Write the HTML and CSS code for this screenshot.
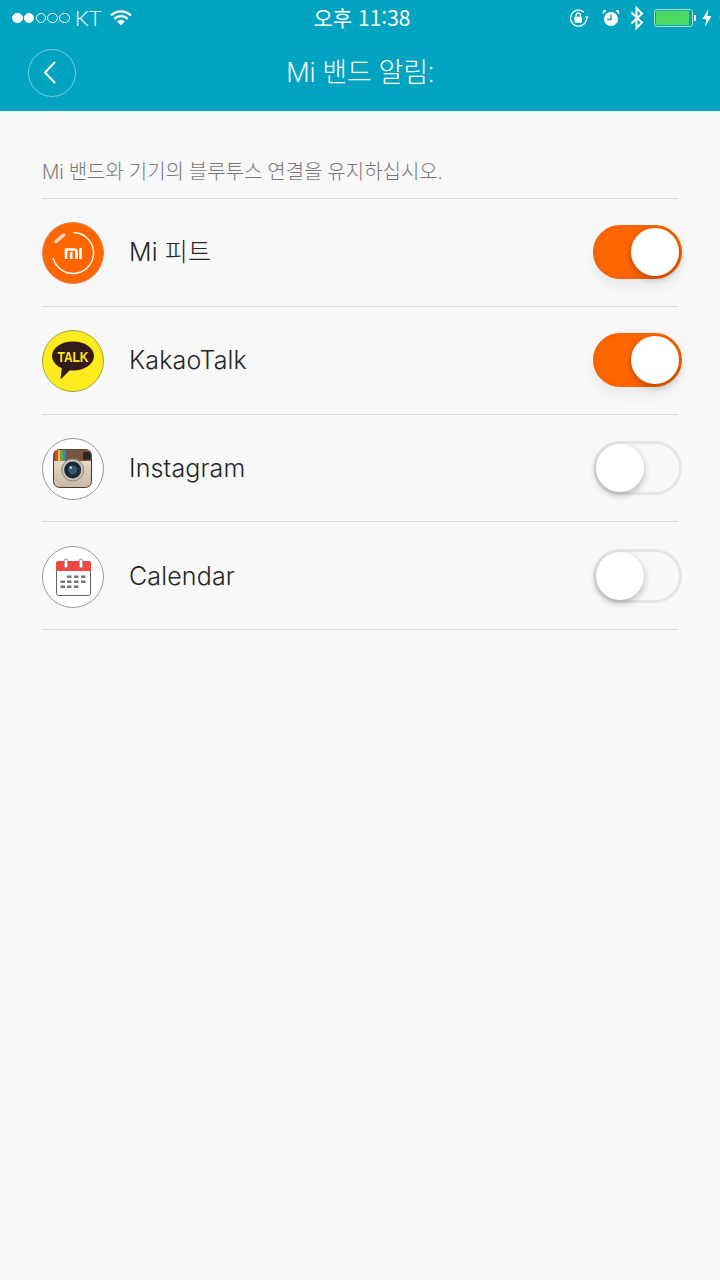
FILE: index.html
```html
<!DOCTYPE html>
<html lang="ko">
<head>
    <title>Mi 밴드 알림</title>
    <meta charset="UTF-8">
    <meta name="viewport" content="width=device-width, initial-scale=1.0">
    <link rel="stylesheet" href="styles.css">
</head>

<body>
    <header class="top">
        <div class="status">
            <div class="status-left">
                <span class="dots">
                    <i class="dot on"></i><i class="dot on"></i><i class="dot"></i><i class="dot"></i><i class="dot"></i>
                </span>
                <span class="carrier">KT</span>
                <svg class="wifi" width="22" height="16" viewBox="0 0 22 16">
                    <path d="M1 5.6a14 14 0 0 1 20 0" fill="none" stroke="#fff" stroke-width="2.2"/>
                    <path d="M4.4 9a9.2 9.2 0 0 1 13.2 0" fill="none" stroke="#fff" stroke-width="2.2"/>
                    <path d="M7.2 11.6a4.8 4.8 0 0 1 7.6 0L11 15.6z" fill="#fff"/>
                </svg>
            </div>
            <div class="status-time">오후 11:38</div>
            <div class="status-right">
                <svg class="lock" width="20" height="18" viewBox="0 0 20 18">
                    <path d="M17.6 9.5A8 8 0 1 1 15 3.2" fill="none" stroke="#fff" stroke-width="1.3"/>
                    <path d="M16 7.6l3.6 0-1.8 2.6z" fill="#fff"/>
                    <rect x="5.4" y="7.8" width="7.6" height="6" rx="1" fill="#fff"/>
                    <path d="M7 8V6.2a2.2 2.2 0 0 1 4.4 0V8" fill="none" stroke="#fff" stroke-width="1.3"/>
                </svg>
                <svg class="alarm" width="18" height="18" viewBox="0 0 18 18">
                    <circle cx="9" cy="10" r="7" fill="#fff"/>
                    <path d="M9 5.5V10.500H5" fill="none" stroke="#00a3c0" stroke-width="1.4"/>
                    <path d="M1 4.500L4 1.600 1.800 1.400zM17 4.500L14 1.600 16.200 1.400z" fill="#fff" stroke="#fff"/>
                </svg>
                <svg class="bt" width="14" height="24" viewBox="0 0 14 24">
                    <path d="M1.500 6.500L12 16.500 6.500 22V2L12 7.500 1.500 17.500" fill="none" stroke="#fff" stroke-width="2"/>
                </svg>
                <span class="battery"><span class="battery-level"></span></span>
                <span class="battery-tip"></span>
                <svg class="bolt" width="10" height="18" viewBox="0 0 10 18">
                    <path d="M6.500 0L0.500 10H4.300L3 18 9.500 7H5.400z" fill="#fff"/>
                </svg>
            </div>
        </div>
        <div class="nav">
            <button class="back" type="button">
                <svg width="14" height="26" viewBox="0 0 14 26">
                    <path d="M12 2L2 12.500 12 23" fill="none" stroke="#fff" stroke-width="2"/>
                </svg>
            </button>
            <h1 class="title">Mi 밴드 알림:</h1>
        </div>
    </header>

    <main class="content">
        <p class="hint">Mi 밴드와 기기의 블루투스 연결을 유지하십시오.</p>

        <ul class="apps">
            <li class="app">
                <svg class="app-icon" width="62" height="62" viewBox="0 0 62 62">
                    <circle cx="31" cy="31" r="30.500" fill="#ff6600" stroke="#d88a5c" stroke-width="1"/>
                    <path d="M31.500 10.500A20.500 20.500 0 1 1 11.200 36" fill="none" stroke="#fff" stroke-width="1.400"/>
                    <path d="M14 19.500L21.500 13" fill="none" stroke="#ffd9c0" stroke-width="3.500" stroke-linecap="round"/>
                    <path d="M24 37V27.500H32Q34.500 27.500 34.500 30V37M29.200 30V37M38.500 26V37" fill="none" stroke="#fff" stroke-width="2.600"/>
                </svg>
                <span class="app-name">Mi 피트</span>
                <span class="switch on"><span class="knob"></span></span>
            </li>
            <li class="app">
                <svg class="app-icon" width="62" height="62" viewBox="0 0 62 62">
                    <circle cx="31" cy="31" r="30.500" fill="#ffeb1e" stroke="#a8a048" stroke-width="1"/>
                    <ellipse cx="31" cy="26" rx="21" ry="14.500" fill="#331b1b"/>
                    <path d="M20 36L18.500 49.500 29 39z" fill="#331b1b"/>
                    <text class="talk" x="31" y="32" text-anchor="middle" textLength="31" lengthAdjust="spacingAndGlyphs">TALK</text>
                </svg>
                <span class="app-name">KakaoTalk</span>
                <span class="switch on"><span class="knob"></span></span>
            </li>
            <li class="app">
                <svg class="app-icon" width="62" height="62" viewBox="0 0 62 62">
                    <defs>
                        <linearGradient id="camBody" x1="0" y1="0" x2="0" y2="1">
                            <stop offset="0" stop-color="#f0e7d8"/>
                            <stop offset="1" stop-color="#c8b8a2"/>
                        </linearGradient>
                    </defs>
                    <circle cx="31" cy="31" r="30.500" fill="#fff" stroke="#999" stroke-width="1"/>
                    <rect x="11.500" y="11.500" width="38" height="38" rx="6" fill="url(#camBody)" stroke="#4e3527" stroke-width="1"/>
                    <path d="M11.500 23V17.500a6 6 0 0 1 6-6h26a6 6 0 0 1 6 6V23z" fill="#7a5540"/>
                    <rect x="13.500" y="12" width="2.500" height="11" fill="#e8413a"/>
                    <rect x="16" y="12" width="2.500" height="11" fill="#f1c232"/>
                    <rect x="18.500" y="12" width="2.500" height="11" fill="#4fae5a"/>
                    <rect x="21" y="12" width="2.500" height="11" fill="#3f88c5"/>
                    <rect x="41" y="14" width="7.500" height="7.500" rx="1" fill="#2b2420"/>
                    <circle cx="30.700" cy="32" r="11" fill="#c9c3b8" stroke="#8d857a" stroke-width="1"/>
                    <circle cx="30.700" cy="32" r="8.500" fill="#1d2a36"/>
                    <circle cx="30.700" cy="32" r="4.500" fill="#33576e"/>
                    <circle cx="28.700" cy="29.500" r="1.300" fill="#cfe2ee"/>
                </svg>
                <span class="app-name">Instagram</span>
                <span class="switch"><span class="knob"></span></span>
            </li>
            <li class="app">
                <svg class="app-icon" width="62" height="62" viewBox="0 0 62 62">
                    <circle cx="31" cy="31" r="30.500" fill="#fff" stroke="#999" stroke-width="1"/>
                    <rect x="14.500" y="15.500" width="34" height="34" rx="2" fill="#fff" stroke="#666" stroke-width="1"/>
                    <path d="M14 25V17.500a2.500 2.500 0 0 1 2.500-2.500h30a2.500 2.500 0 0 1 2.500 2.500V25z" fill="#f4473f"/>
                    <rect x="22.200" y="13" width="3.600" height="9" rx="1.800" fill="#fff" stroke="#777" stroke-width="0.800"/>
                    <rect x="37.200" y="13" width="3.600" height="9" rx="1.800" fill="#fff" stroke="#777" stroke-width="0.800"/>
                    <path d="M25 29.500h4.500v2.500h-4.500zM32 29.500h4.500v2.500h-4.500zM39 29.500h4.500v2.500h-4.500zM18.500 34.500h4.500v2.500h-4.500zM25 34.500h4.500v2.500h-4.500zM32 34.500h4.500v2.500h-4.500zM39 34.500h4.500v2.500h-4.500zM18.500 39.500h4.500v2.500h-4.500zM25 39.500h4.500v2.500h-4.500zM32 39.500h4.500v2.500h-4.500z" fill="#777"/>
                </svg>
                <span class="app-name">Calendar</span>
                <span class="switch"><span class="knob"></span></span>
            </li>
        </ul>
    </main>
</body>
</html>
```

FILE: styles.css
```css
/* Page */
html, body {
    height: 100%;
}

body {
    margin: 0;
    background-color: #f8f8f8;
    font-family: Roboto, "Noto Sans CJK KR", sans-serif;
    color: #262626;
}

/* Top bar */
.top {
    height: 111px;
    background-color: #00a3c0;
    color: #fff;
}

.status {
    height: 36px;
    display: grid;
    grid-template-columns: 1fr auto 1fr;
    align-items: center;
    padding: 0 8px 0 12px;
}

.status-left,
.status-right {
    display: flex;
    align-items: center;
}

.status-right {
    justify-content: flex-end;
}

.dots {
    display: flex;
    gap: 1.300px;
}

.dot {
    width: 10.500px;
    height: 10.500px;
    box-sizing: border-box;
    border: 1px solid #fff;
    border-radius: 50%;
}

.dot.on {
    background-color: #fff;
}

.carrier {
    margin-left: 5px;
    padding-bottom: 2px;
    font-family: Lato, sans-serif;
    font-weight: 300;
    font-size: 22px;
}

.wifi {
    margin-left: 9px;
}

.status-time {
    padding-bottom: 3px;
    font-family: "Noto Sans CJK KR", sans-serif;
    font-size: 21px;
}

.lock {
    margin-right: 13px;
}

.alarm {
    margin-right: 10px;
}

.bt {
    margin-right: 10px;
}

.battery {
    width: 39px;
    height: 18px;
    box-sizing: border-box;
    padding: 1px;
    border: 1px solid #a5e6c0;
    border-radius: 3px;
}

.battery-level {
    display: block;
    width: 33px;
    height: 100%;
    background-color: #4cd964;
}

.battery-tip {
    width: 2px;
    height: 6px;
    margin-left: 1px;
    background-color: #fff;
}

.bolt {
    margin-left: 6px;
}

.nav {
    position: relative;
    height: 72px;
    display: flex;
    align-items: center;
    justify-content: center;
}

.back {
    position: absolute;
    left: 28px;
    top: 13px;
    width: 48px;
    height: 48px;
    padding: 0 4px 0 0;
    background: none;
    border: 1px solid rgba(255, 255, 255, 0.45);
    border-radius: 50%;
    display: flex;
    align-items: center;
    justify-content: center;
}

.title {
    margin: 0;
    padding-bottom: 3px;
    font-size: 27px;
    font-weight: 300;
}

/* Content */
.content {
    padding: 0 42px;
}

.hint {
    margin: 0;
    padding: 47px 0 12px;
    height: 28px;
    line-height: 28px;
    font-size: 20px;
    font-weight: 300;
    color: #777;
    border-bottom: 1px solid #dcdcdc;
}

.apps {
    list-style: none;
    margin: 0;
    padding: 0;
}

.app {
    height: 106.750px;
    display: flex;
    align-items: center;
    border-bottom: 1px solid #dcdcdc;
}

.app-icon {
    flex: none;
    margin: 2px 25px 0 0;
}

.app-name {
    flex: 1;
    line-height: 30px;
    font-family: Inter, "Noto Sans CJK KR", sans-serif;
    font-size: 25px;
    letter-spacing: 0.15px;
    font-weight: 300;
}

.talk {
    font-family: "Liberation Sans", sans-serif;
    font-size: 14px;
    font-weight: bold;
    fill: #ffeb1e;
}

/* Switches */
.switch {
    flex: none;
    width: 89px;
    height: 54px;
    margin-right: -4px;
    box-sizing: border-box;
    border: 3px solid #e6e6e6;
    border-radius: 27px;
    display: flex;
    align-items: center;
    justify-content: flex-start;
}

.switch.on {
    background-color: #ff6600;
    border-color: #f96200;
    justify-content: flex-end;
    box-shadow: 0 8px 14px rgba(0, 0, 0, 0.06);
}

.knob {
    width: 48px;
    height: 48px;
    border-radius: 50%;
    background-color: #fff;
    box-shadow: 0 3px 7px rgba(0, 0, 0, 0.28);
}
```
